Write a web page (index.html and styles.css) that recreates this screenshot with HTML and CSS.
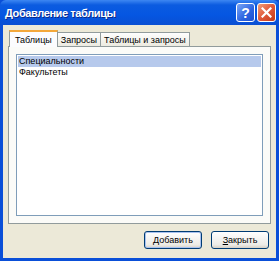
FILE: index.html
```html
<!DOCTYPE html>
<html lang="ru">
<head>
  <meta charset="UTF-8" />
  <title>Добавление таблицы</title>
  <link rel="stylesheet" href="styles.css">
</head>
<body>
  <div class="window">
    <div class="titlebar">
      <span class="title">Добавление таблицы</span>
      <div class="caption-buttons">
        <div class="cap-btn help">?</div>
        <div class="cap-btn close">
          <svg width="11" height="11" viewBox="0 0 11 11">
            <path d="M1.5 1.5 L9.5 9.5 M9.5 1.5 L1.5 9.5" stroke="#fff" stroke-width="2.2" stroke-linecap="square" />
          </svg>
        </div>
      </div>
    </div>
    <div class="frame">
      <div class="tabs">
        <div class="tab active">Таблицы</div>
        <div class="tab">Запросы</div>
        <div class="tab">Таблицы и запросы</div>
      </div>
      <div class="panel">
        <ul class="list">
          <li class="selected">Специальности</li>
          <li>Факультеты</li>
        </ul>
      </div>
      <div class="button-row">
        <button class="btn default"><u>Д</u>обавить</button>
        <button class="btn"><u>З</u>акрыть</button>
      </div>
    </div>
  </div>
</body>
</html>
```

FILE: styles.css
```css
body {
  margin: 0;
  font-family: "Liberation Sans", Arial, sans-serif;
  font-size: 9px;
}
.window {
  width: 279px;
  height: 261px;
  display: flex;
  flex-direction: column;
  background: #0a4fd8;
}
.titlebar {
  height: 25px;
  display: flex;
  align-items: center;
  justify-content: space-between;
  padding: 0 3px 0 5px;
  background: linear-gradient(#3d87f2, #0b5be0 20%, #0556e2 60%, #0a4fd3);
  border-radius: 6px 6px 0 0;
}
.title {
  color: #fff;
  font-weight: bold;
  font-size: 11px;
  letter-spacing: -0.4px;
  text-shadow: 1px 1px 0 #0a2a8c;
}
.caption-buttons {
  display: flex;
  gap: 2px;
}
.cap-btn {
  width: 17px;
  height: 17px;
  border: 1px solid #fff;
  border-radius: 3px;
  display: flex;
  align-items: center;
  justify-content: center;
  color: #fff;
  font-weight: bold;
  font-size: 14px;
}
.help {
  background: linear-gradient(135deg, #7aa6f6, #2b63e0 60%, #1d50d0);
}
.close {
  background: linear-gradient(135deg, #f0a07a, #e0583a 50%, #c23a18);
}
.frame {
  flex: 1;
  margin: 0 3px 3px;
  background: #ece9d8;
  display: flex;
  flex-direction: column;
  padding: 5px 5px 0;
}
.tabs {
  display: flex;
  align-items: flex-end;
  padding-left: 1px;
  height: 16px;
}
.tab {
  height: 13px;
  padding: 0 3px;
  line-height: 14px;
  border: 1px solid #919b9c;
  border-bottom: none;
  background: linear-gradient(#fefefe, #eceae0);
  margin-right: -1px;
}
.tab.active {
  height: 15px;
  line-height: 16px;
  border-top: 2px solid #f4a83a;
  background: #fcfcfe;
  position: relative;
  z-index: 1;
  margin-bottom: -1px;
  padding: 0 5px;
}
.panel {
  height: 178px;
  border: 1px solid #919b9c;
  background: #fbfbf8;
  padding: 7px;
  box-sizing: border-box;
}
.list {
  list-style: none;
  margin: 0;
  padding: 1px;
  height: 100%;
  box-sizing: border-box;
  background: #fff;
  border: 1px solid #7f9db9;
}
.list li {
  height: 11px;
  line-height: 11px;
  padding-left: 1px;
}
.list li.selected {
  background: #b6c9ec;
}
.button-row {
  display: flex;
  justify-content: flex-end;
  gap: 9px;
  padding: 7px 2px 0;
}
.btn {
  width: 58px;
  height: 18px;
  padding: 0;
  font-family: "Liberation Sans", Arial, sans-serif;
  font-size: 9px;
  background: linear-gradient(#fff, #ecebe6 80%, #d6d0c5);
  border: 1px solid #003c74;
  border-radius: 3px;
}
.btn.default {
  box-shadow: inset 0 0 0 1px #a9c2ef;
}
```
